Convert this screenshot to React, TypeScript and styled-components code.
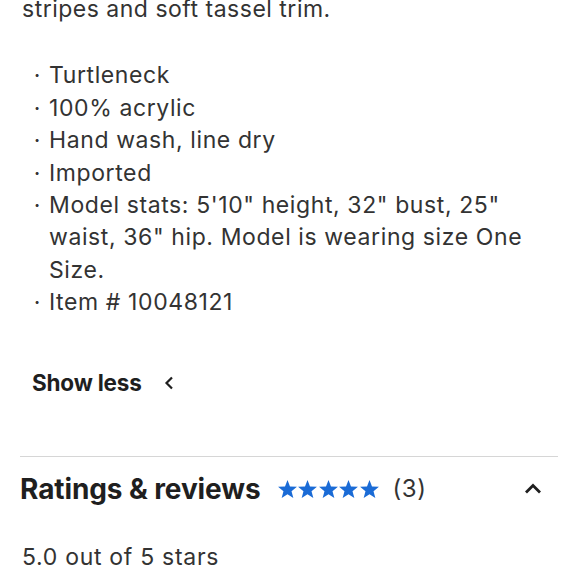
import styled, { createGlobalStyle } from "styled-components";

const GlobalStyle = createGlobalStyle`
  html, body {
    margin: 0;
    padding: 0;
    background: #fff;
  }
  body {
    font-family: Inter, "Liberation Sans", sans-serif;
    color: #333;
    overflow: hidden;
  }
`;

const Page = styled.div`
  width: 580px;
  height: 580px;
  padding: 0 22px 0 20px;
  box-sizing: border-box;
  overflow: hidden;
`;

const Description = styled.div`
  margin-top: -7px;
  font-size: 23px;
  line-height: 32.4px;
  letter-spacing: 0.5px;
  color: #333;
`;

const Para = styled.p`
  margin: 0 0 0 2px;
`;

const List = styled.ul`
  list-style: none;
  margin: 34px 0 0;
  padding: 0;
`;

const Item = styled.li`
  display: flex;
  padding-right: 14px;
`;

const Dot = styled.span`
  flex: 0 0 29px;
  text-align: right;
  padding-right: 8px;
  box-sizing: border-box;
`;

const ItemText = styled.span`
  letter-spacing: 0.6px;
`;

const ShowLess = styled.button`
  display: flex;
  align-items: center;
  gap: 22px;
  margin: 51px 0 0 12px;
  padding: 0;
  border: 0;
  background: none;
  font-family: Inter, "Liberation Sans", sans-serif;
  font-weight: 700;
  font-size: 22.5px;
  line-height: 26px;
  letter-spacing: -0.2px;
  color: #1f1f1f;
`;

const Divider = styled.hr`
  margin: 60px 0 0;
  border: 0;
  border-top: 1px solid #d6d6d6;
`;

const Header = styled.div`
  display: flex;
  align-items: center;
  height: 64px;
  padding-right: 16px;
`;

const Title = styled.h2`
  margin: 0;
  font-size: 28px;
  font-weight: 700;
  letter-spacing: -0.1px;
  color: #1f1f1f;
`;

const Stars = styled.div`
  display: flex;
  gap: 1.5px;
  margin-left: 17px;
`;

const Count = styled.span`
  margin-left: 14px;
  font-size: 24px;
  letter-spacing: 0.5px;
  color: #333;
`;

const Toggle = styled.span`
  margin-left: auto;
  display: flex;
`;

const Summary = styled.p`
  margin: 22px 0 0 2px;
  font-size: 23px;
  letter-spacing: 0.7px;
  color: #333;
`;

const Star = () => (
  <svg width="19" height="18" viewBox="1 0 22 21">
    <path
      fill="#1a6bd6"
      d="M12 0l2.9 7.6 8.1.4-6.3 5.1 2.1 7.9L12 16.5 5.2 21l2.1-7.9L1 8l8.1-.4z"
    />
  </svg>
);

const features = [
  "Turtleneck",
  "100% acrylic",
  "Hand wash, line dry",
  "Imported",
  'Model stats: 5\'10" height, 32" bust, 25" waist, 36" hip. Model is wearing size One Size.',
  "Item # 10048121",
];

function App() {
  return (
    <Page>
      <GlobalStyle />
      <Description>
        <Para>stripes and soft tassel trim.</Para>
        <List>
          {features.map((f) => (
            <Item key={f}>
              <Dot>·</Dot>
              <ItemText>{f}</ItemText>
            </Item>
          ))}
        </List>
      </Description>
      <ShowLess>
        Show less
        <svg width="10" height="14" viewBox="0 0 10 14">
          <path d="M8 1.5L2.5 7 8 12.5" fill="none" stroke="#1f1f1f" strokeWidth="2.2" />
        </svg>
      </ShowLess>
      <Divider />
      <Header>
        <Title>Ratings &amp; reviews</Title>
        <Stars>
          {[0, 1, 2, 3, 4].map((i) => (
            <Star key={i} />
          ))}
        </Stars>
        <Count>(3)</Count>
        <Toggle>
          <svg width="18" height="11" viewBox="0 0 18 11">
            <path d="M2 9.5L9 2.5l7 7" fill="none" stroke="#1f1f1f" strokeWidth="2.8" />
          </svg>
        </Toggle>
      </Header>
      <Summary>5.0 out of 5 stars</Summary>
    </Page>
  );
}

export default App;
